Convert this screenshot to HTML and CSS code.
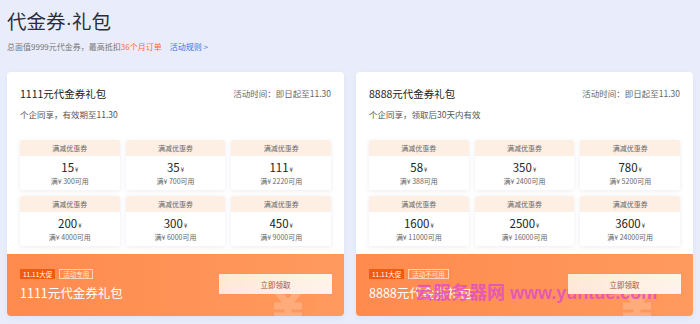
FILE: index.html
```
<!DOCTYPE html>
<html lang="zh-CN">
<head>
    <meta charset="UTF-8">
    <title>代金券·礼包</title>
    <link rel="stylesheet" href="styles.css">
</head>
<body>
    <div class="page">
        <h1 class="title">代金券<span class="dot">·</span>礼包</h1>
        <p class="subtitle">总面值9999元代金券，最高抵扣<span class="hot">36个月订单</span><a class="rules">活动规则 &gt;</a></p>

        <div class="packs">
            <div class="pack">
                <div class="pack-body">
                    <div class="pack-head">
                        <span class="pack-name">1111元代金券礼包</span>
                        <span class="pack-time">活动时间：即日起至11.30</span>
                    </div>
                    <p class="pack-desc">个企同享，有效期至11.30</p>
                    <div class="coupons">
                        <div class="coupon"><div class="coupon-type">满减优惠券</div><div class="coupon-value">15<small>¥</small></div><div class="coupon-cond">满¥ 300可用</div></div>
                        <div class="coupon"><div class="coupon-type">满减优惠券</div><div class="coupon-value">35<small>¥</small></div><div class="coupon-cond">满¥ 700可用</div></div>
                        <div class="coupon"><div class="coupon-type">满减优惠券</div><div class="coupon-value">111<small>¥</small></div><div class="coupon-cond">满¥ 2220可用</div></div>
                        <div class="coupon"><div class="coupon-type">满减优惠券</div><div class="coupon-value">200<small>¥</small></div><div class="coupon-cond">满¥ 4000可用</div></div>
                        <div class="coupon"><div class="coupon-type">满减优惠券</div><div class="coupon-value">300<small>¥</small></div><div class="coupon-cond">满¥ 6000可用</div></div>
                        <div class="coupon"><div class="coupon-type">满减优惠券</div><div class="coupon-value">450<small>¥</small></div><div class="coupon-cond">满¥ 9000可用</div></div>
                    </div>
                </div>
                <div class="pack-foot">
                    <div>
                        <div class="tags"><span class="tag">11.11大促</span><span class="tag tag-line">活动专用</span></div>
                        <div class="foot-name">1111元代金券礼包</div>
                    </div>
                    <button class="get-btn">立即领取</button>
                    <svg class="yen-mark" width="44" height="34" viewBox="0 0 44 34">
                        <path d="M10 0 L22 14 L34 0 M22 14 V34 M8 16 H36 M8 26 H36" fill="none" stroke="#fff" stroke-width="7"/>
                    </svg>
                </div>
            </div>

            <div class="pack">
                <div class="pack-body">
                    <div class="pack-head">
                        <span class="pack-name">8888元代金券礼包</span>
                        <span class="pack-time">活动时间：即日起至11.30</span>
                    </div>
                    <p class="pack-desc">个企同享，领取后30天内有效</p>
                    <div class="coupons">
                        <div class="coupon"><div class="coupon-type">满减优惠券</div><div class="coupon-value">58<small>¥</small></div><div class="coupon-cond">满¥ 388可用</div></div>
                        <div class="coupon"><div class="coupon-type">满减优惠券</div><div class="coupon-value">350<small>¥</small></div><div class="coupon-cond">满¥ 2400可用</div></div>
                        <div class="coupon"><div class="coupon-type">满减优惠券</div><div class="coupon-value">780<small>¥</small></div><div class="coupon-cond">满¥ 5200可用</div></div>
                        <div class="coupon"><div class="coupon-type">满减优惠券</div><div class="coupon-value">1600<small>¥</small></div><div class="coupon-cond">满¥ 11000可用</div></div>
                        <div class="coupon"><div class="coupon-type">满减优惠券</div><div class="coupon-value">2500<small>¥</small></div><div class="coupon-cond">满¥ 16000可用</div></div>
                        <div class="coupon"><div class="coupon-type">满减优惠券</div><div class="coupon-value">3600<small>¥</small></div><div class="coupon-cond">满¥ 24000可用</div></div>
                    </div>
                </div>
                <div class="pack-foot">
                    <div>
                        <div class="tags"><span class="tag">11.11大促</span><span class="tag tag-line">活动不可用</span></div>
                        <div class="foot-name">8888元代金券礼包</div>
                    </div>
                    <button class="get-btn">立即领取</button>
                    <svg class="yen-mark" width="44" height="34" viewBox="0 0 44 34">
                        <path d="M10 0 L22 14 L34 0 M22 14 V34 M8 16 H36 M8 26 H36" fill="none" stroke="#fff" stroke-width="7"/>
                    </svg>
                </div>
            </div>
        </div>
    </div>
    <div class="watermark">云服务器网 www.yuntue.com</div>
</body>
</html>
```

FILE: styles.css
```
body {
    margin: 0;
    background: #e9edfb;
    font-family: "Noto Sans CJK SC", "Noto Sans", sans-serif;
    color: #333;
    position: relative;
    height: 324px;
    overflow: hidden;
}
.page {
    padding: 6px 7px 0;
}
.title {
    margin: 0;
    font-size: 19.5px;
    line-height: 30px;
    font-weight: 400;
    color: #2b2f3a;
}
.dot {
    font-family: "Liberation Sans", sans-serif;
}
.subtitle {
    margin: 4px 0 0;
    font-size: 8px;
    line-height: 12px;
    color: #777;
}
.hot {
    color: #ff6a2a;
}
.rules {
    color: #3a72e0;
    margin-left: 8px;
}
.packs {
    display: grid;
    grid-template-columns: 1fr 1fr;
    gap: 12px;
    margin-top: 19px;
}
.pack {
    height: 244px;
    background: #fff;
    border-radius: 4px;
    overflow: hidden;
    box-shadow: 0 2px 6px rgba(90, 110, 180, 0.08);
}
.pack-body {
    height: 182px;
    box-sizing: border-box;
    padding: 11px 13px 0;
}
.pack-head {
    display: flex;
    justify-content: space-between;
    align-items: center;
    height: 20px;
}
.pack-name {
    font-size: 10.5px;
    color: #222;
}
.pack-time {
    font-size: 8.5px;
    color: #666;
}
.pack-desc {
    margin: 3px 0 0;
    font-size: 8.5px;
    line-height: 16px;
    height: 16px;
    color: #555;
}
.coupons {
    display: grid;
    grid-template-columns: repeat(3, 1fr);
    grid-auto-rows: 50px;
    gap: 6px;
    margin-top: 18px;
}
.coupon {
    background: #fff;
    border-radius: 2px;
    box-shadow: 0 1px 4px rgba(120, 130, 170, 0.15);
    text-align: center;
    overflow: hidden;
}
.coupon-type {
    background: #fdefe4;
    font-size: 7px;
    line-height: 16px;
    height: 16px;
    color: #666;
}
.coupon-value {
    font-size: 11.5px;
    line-height: 18px;
    height: 18px;
    margin-top: 2px;
    color: #222;
}
.coupon-value small {
    font-size: 6px;
    line-height: 0;
    margin-left: 1px;
}
.coupon-cond {
    font-size: 7px;
    line-height: 11px;
    height: 11px;
    color: #666;
}
.pack-foot {
    position: relative;
    height: 62px;
    box-sizing: border-box;
    padding: 15px 12px 0 13px;
    display: flex;
    justify-content: space-between;
    align-items: flex-start;
    background: linear-gradient(90deg, #ff8a4e, #ff9a5e);
    overflow: hidden;
}
.tags {
    display: flex;
    gap: 4px;
    height: 10px;
}
.tag {
    font-size: 6.5px;
    line-height: 10px;
    padding: 0 3px;
    background: #f25a0c;
    color: #fff;
}
.tag-line {
    background: transparent;
    border: 1px solid rgba(255, 255, 255, 0.6);
    line-height: 8px;
    color: #ffe8da;
}
.foot-name {
    margin-top: 5px;
    font-size: 12.5px;
    line-height: 18px;
    color: #fff;
}
.get-btn {
    margin-top: 5px;
    width: 113px;
    height: 20px;
    border: none;
    padding: 0;
    background: linear-gradient(90deg, #fee8d8, #fff4ea);
    font-family: inherit;
    font-size: 7.5px;
    color: #a0523a;
    position: relative;
    z-index: 1;
}
.yen-mark {
    position: absolute;
    right: 34px;
    bottom: -8px;
    opacity: 0.2;
}
.watermark {
    position: absolute;
    left: 415px;
    top: 278px;
    font-size: 18px;
    font-weight: 700;
    color: rgba(226, 78, 200, 0.85);
    white-space: nowrap;
    font-family: "Liberation Sans", "Noto Sans CJK SC", sans-serif;
}
```
